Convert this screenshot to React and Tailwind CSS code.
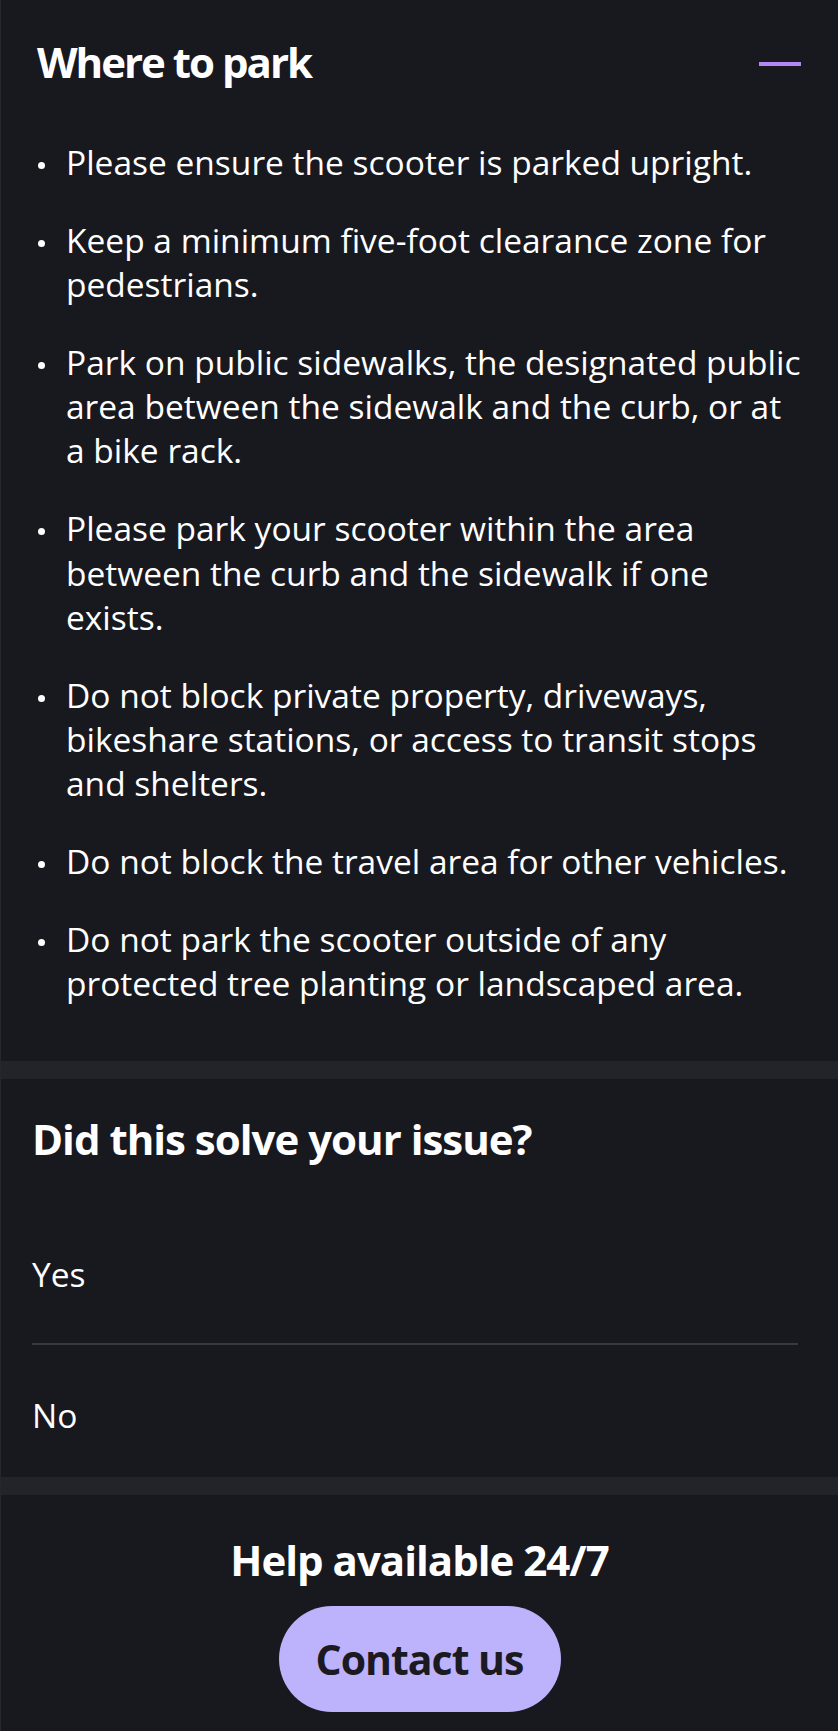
import React from "react";

const items = [
  "Please ensure the scooter is parked upright.",
  "Keep a minimum five-foot clearance zone for pedestrians.",
  "Park on public sidewalks, the designated public area between the sidewalk and the curb, or at a bike rack.",
  "Please park your scooter within the area between the curb and the sidewalk if one exists.",
  "Do not block private property, driveways, bikeshare stations, or access to transit stops and shelters.",
  "Do not block the travel area for other vehicles.",
  "Do not park the scooter outside of any protected tree planting or landscaped area.",
];

export default function App() {
  return (
    <div
      className="w-full min-h-screen bg-[#18181f] text-white border-l border-[#26272c]"
      style={{ fontFamily: '"Open Sans", "Liberation Sans", sans-serif' }}
    >
      {/* Section 1 */}
      <section className="pl-[36px] pr-[37px] pt-[38px] pb-[56px]">
        <div className="flex items-center justify-between h-[48px]">
          <h2 className="text-[42px] leading-[48px] font-bold tracking-[-2px]">Where to park</h2>
          <span className="block w-[42px] h-[4px] bg-[#b585f5] mt-[4px]" />
        </div>
        <ul className="mt-[54px] mr-[-3px] flex flex-col gap-[33.5px]">
          {items.map((t, i) => (
            <li key={i} className="flex items-start">
              <span className="mt-[22px] ml-[1px] w-[7px] h-[7px] rounded-full bg-white shrink-0" />
              <span className="ml-[21px] text-[33.5px] leading-[44.3px]">{t}</span>
            </li>
          ))}
        </ul>
      </section>

      <div className="h-[18px] bg-[#232429]" />

      {/* Section 2 */}
      <section className="pl-[31px] pr-[40px] pt-[36px]">
        <h2 className="text-[42px] leading-[48px] font-bold tracking-[-1px]">Did this solve your issue?</h2>
        <div className="mt-[41px]">
          <div className="pt-[48px] pb-[47px] border-b-2 border-[#38393e]">
            <span className="block text-[33.5px] leading-[44px]">Yes</span>
          </div>
          <div className="pt-[48px] pb-[40px]">
            <span className="block text-[33.5px] leading-[44px]">No</span>
          </div>
        </div>
      </section>

      <div className="h-[18px] bg-[#232429]" />

      {/* Section 3 */}
      <section className="flex flex-col items-center pt-[41px] pb-[18px]">
        <h2 className="text-[42px] leading-[48px] font-bold tracking-[-1px]">Help available 24/7</h2>
        <button className="mt-[22px] w-[282px] h-[106px] rounded-full bg-[#bcb3fc] text-[#1b1a22] text-[41px] font-bold tracking-[-1px] flex items-center justify-center">
          Contact us
        </button>
      </section>
    </div>
  );
}
